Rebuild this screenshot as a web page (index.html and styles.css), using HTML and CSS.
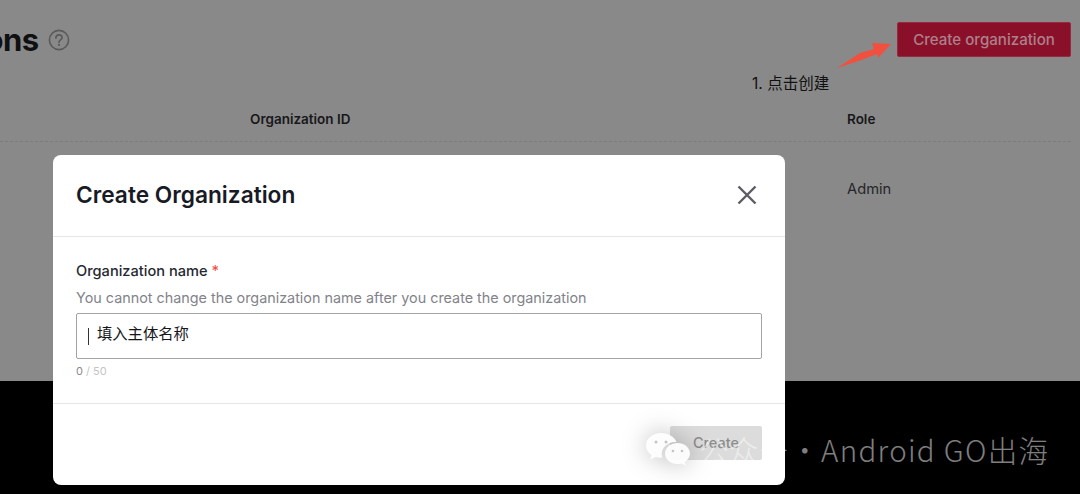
FILE: index.html
```html
<!DOCTYPE html>
<html lang="en">
<head>
<meta charset="utf-8">
<title>Create Organization</title>
<link rel="stylesheet" href="styles.css">
</head>
<body>
<main class="page">
  <header class="page-head">
    <div class="title-wrap">
      <h1 class="title">Organizations</h1>
      <svg class="help" width="22" height="22" viewBox="0 0 22 22" fill="none">
        <circle cx="11" cy="11" r="9.6" stroke="#5a5a5a" stroke-width="1.6"/>
        <path d="M7.9 8.9c0-1.9 1.4-3 3.1-3 1.8 0 3.1 1.1 3.1 2.7 0 2.3-3.1 2.3-3.1 4.6" stroke="#5a5a5a" stroke-width="1.7" stroke-linecap="round"/>
        <circle cx="11" cy="15.9" r="1.1" fill="#5a5a5a"/>
      </svg>
    </div>
    <button class="create-org">Create organization</button>
  </header>
  <p class="step">1. 点击创建</p>
  <div class="table-head">
    <span class="col-id">Organization ID</span>
    <span class="col-role">Role</span>
  </div>
  <div class="table-row">
    <span class="col-id"></span>
    <span class="col-role">Admin</span>
  </div>
</main>
<div class="footer-band"></div>

<svg class="arrow" width="60" height="32" viewBox="0 0 60 32">
  <path d="M1 28 L24 13 L38 9 L36 3 L55 4 L42 18 L41 14 L24 20.500 Z" fill="#f2503f"/>
</svg>

<section class="modal">
  <div class="modal-head">
    <h2 class="modal-title">Create Organization</h2>
    <svg class="close" width="22" height="22" viewBox="0 0 22 22">
      <path d="M2.500 2.500 L19.500 19.500 M19.500 2.500 L2.500 19.500" stroke="#5c5c64" stroke-width="2.400"/>
    </svg>
  </div>
  <div class="modal-body">
    <label class="field-label">Organization name <span class="req">*</span></label>
    <p class="hint">You cannot change the organization name after you create the organization</p>
    <div class="input"><span class="caret"></span><span class="input-text">填入主体名称</span></div>
    <p class="count"><span class="count-now">0</span> / 50</p>
  </div>
  <div class="modal-foot">
    <button class="create">Create</button>
  </div>
</section>

<div class="watermark">
  <svg class="wechat" width="46" height="36" viewBox="0 0 46 36">
    <path d="M16 1C7.600 1 1 6.600 1 13.400c0 3.900 2.200 7.400 5.600 9.700L5.400 27.600l5-2.700c1.700.5 3.500.8 5.400.8.5 0 1 0 1.500-.1-.4-1.200-.6-2.500-.6-3.800 0-6.600 6.200-11.900 13.800-11.900h1C29.300 4.800 23.100 1 16 1z" fill="#fff" fill-opacity=".92"/>
    <path d="M45 21.600c0-5.800-5.600-10.500-12.500-10.500S20 15.800 20 21.600s5.600 10.500 12.500 10.500c1.500 0 2.900-.2 4.200-.6l4 2.200-1-3.700c3.200-1.900 5.300-4.900 5.300-8.400z" fill="#fff" fill-opacity=".92"/>
    <circle cx="11" cy="10" r="1.500" fill="#c4c4c4"/><circle cx="21" cy="10" r="1.500" fill="#c4c4c4"/>
    <circle cx="28" cy="19" r="1.300" fill="#c4c4c4"/><circle cx="37" cy="19" r="1.300" fill="#c4c4c4"/>
  </svg>
  <span class="wm-text">公众号 · <span class="wm-name">Android GO出海</span></span>
</div>
</body>
</html>
```
FILE: styles.css
```css
* { box-sizing: border-box; }
html, body { margin: 0; padding: 0; }
body {
  width: 1080px;
  height: 494px;
  overflow: hidden;
  background: #000;
  font-family: Inter, "Noto Sans CJK SC", sans-serif;
  position: relative;
}
.page {
  height: 381px;
  background: #898989;
  padding: 22px 9px 0 0;
  color: #141416;
}
.page-head {
  display: flex;
  justify-content: space-between;
  align-items: flex-start;
  height: 36px;
}
.title-wrap {
  display: flex;
  align-items: center;
  gap: 9px;
  height: 36px;
  margin-left: -167px;
}
.title {
  margin: 0;
  font-size: 31px;
  line-height: 36px;
  font-weight: 700;
  letter-spacing: -.5px;
  color: #101012;
  white-space: nowrap;
}
.help { flex: none; }
.create-org {
  width: 174px;
  height: 35px;
  border: 1px solid #98293f;
  border-radius: 2px;
  background: #8a102a;
  color: #ad808c;
  font: 500 15.100px/1 Inter, sans-serif;
  padding: 0;
}
.step {
  margin: 16px 0 0 752px;
  font-size: 15.500px;
  line-height: 20px;
  color: #111;
}
.table-head, .table-row {
  display: grid;
  grid-template-columns: 250px 597px 1fr;
}
.table-head {
  margin-top: 15px;
  height: 33px;
  font-size: 13.500px;
  line-height: 20px;
  font-weight: 600;
  color: #18181a;
  border-bottom: 1px dashed #7c7c7c;
}
.col-id { grid-column: 2; }
.col-role { grid-column: 3; }
.table-row {
  padding-top: 37px;
  font-size: 14.700px;
  line-height: 20px;
  color: #26262a;
}
.footer-band { height: 113px; background: #000; }
.arrow {
  position: absolute;
  left: 836px;
  top: 40px;
}
.modal {
  position: absolute;
  left: 53px;
  top: 155px;
  width: 732px;
  height: 330px;
  background: #fff;
  border-radius: 8px;
  display: flex;
  flex-direction: column;
  color: #1b1c25;
}
.modal-head {
  height: 82px;
  padding: 0 27px 1px 23px;
  display: flex;
  justify-content: space-between;
  align-items: center;
  border-bottom: 1px solid #e6e6e8;
}
.modal-title {
  margin: 0;
  font-size: 22.700px;
  font-weight: 600;
  line-height: 30px;
  color: #181a26;
}
.close { flex: none; }
.modal-body {
  height: 167px;
  padding: 24px 23px 0;
  border-bottom: 1px solid #e6e6e8;
}
.field-label {
  display: block;
  font-size: 14.600px;
  font-weight: 500;
  line-height: 20px;
  color: #262832;
}
.req { color: #f0504a; }
.hint {
  margin: 7px 0 0;
  font-size: 14.370px;
  line-height: 20px;
  color: #82838a;
}
.input {
  margin-top: 5px;
  height: 46px;
  border: 1px solid #a4a4a6;
  border-radius: 2px;
  display: flex;
  align-items: center;
  padding-left: 11px;
  gap: 8px;
}
.caret {
  width: 1px;
  height: 17px;
  background: #333;
}
.input-text {
  font-size: 15.300px;
  line-height: 20px;
  color: #16161a;
  font-family: "Noto Sans CJK SC", sans-serif;
  margin-bottom: 9px;
}
.count {
  margin: 5px 0 0;
  font-size: 11px;
  line-height: 14px;
  color: #c4c4c6;
}
.count-now { color: #8a8a8e; }
.modal-foot {
  flex: 1;
  display: flex;
  justify-content: flex-end;
  padding: 22px 23px 0 0;
  align-items: flex-start;
}
.create {
  width: 92px;
  height: 34px;
  border: none;
  border-radius: 2px;
  background: #dcdcdc;
  color: #8d8d8d;
  font: 500 14.500px/1 Inter, sans-serif;
  padding: 0;
}
.watermark {
  position: absolute;
  left: 645px;
  top: 432px;
  display: flex;
  align-items: center;
  gap: 8px;
  height: 36px;
  pointer-events: none;
}
.wechat { flex: none; filter: drop-shadow(0 0 12px rgba(0,0,0,.3)); }
.wm-text {
  font-family: "Noto Sans CJK SC", sans-serif;
  font-size: 29.500px;
  font-weight: 300;
  line-height: 36px;
  letter-spacing: .5px;
  word-spacing: -6px;
  margin-top: -2px;
  color: rgba(255,255,255,.5);
  white-space: nowrap;
}
.wm-name {
  letter-spacing: 1.300px;
  word-spacing: 0;
}
```
